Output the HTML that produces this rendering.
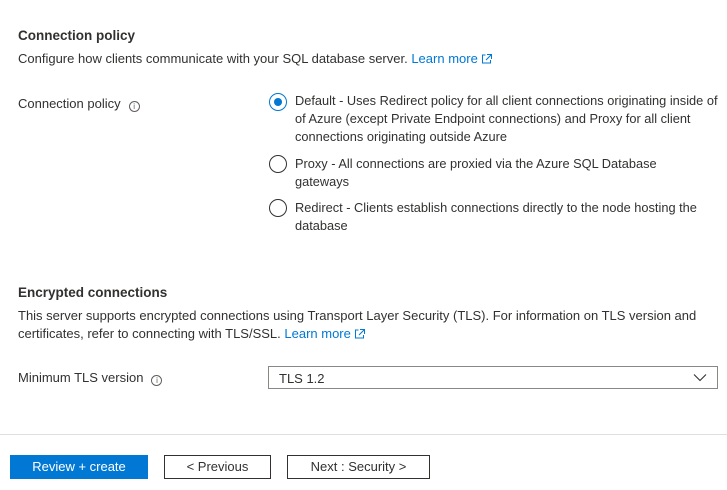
<!DOCTYPE html>
<html><head><style>
body{margin:0;width:727px;height:490px;background:#fff;font-family:"Liberation Sans",sans-serif;font-size:13px;color:#323130;position:relative;overflow:hidden}
.a{position:absolute;white-space:nowrap}
a{color:#0078d4;text-decoration:none}
.info{display:inline-block;width:11px;height:11px;border:1px solid #605e5c;border-radius:50%;font-size:8px;line-height:10px;text-align:center;color:#605e5c;margin-left:8px;vertical-align:-1px;box-sizing:border-box}
.r{position:absolute;width:18px;height:18px;border:1px solid #323130;border-radius:50%;box-sizing:border-box;left:269px}
.rt{position:absolute;left:295px;line-height:18px;white-space:nowrap;font-size:12.8px}
.btn{position:absolute;top:455px;height:24px;box-sizing:border-box;border:1px solid #323130;text-align:center;line-height:22px;font-size:13px}
.hd{font-size:13.5px;font-weight:bold}
</style></head><body>
<div class="a hd" style="left:18px;top:28px">Connection policy</div>
<div class="a" style="left:18px;top:51px">Configure how clients communicate with your SQL database server. <a>Learn more</a><svg width="12" height="11" style="margin-left:3px;vertical-align:-1px"><path d="M4.5 2H1.5V10H9.5V7M6 1.5H10.5V6M10.5 1.5L5 7" fill="none" stroke="#0078d4"/></svg></div>
<div class="a" style="left:18px;top:96px">Connection policy<span class="info">i</span></div>
<div class="r" style="top:93px;border-color:#0078d4"><div style="position:absolute;left:4px;top:4px;width:8px;height:8px;border-radius:50%;background:#0078d4"></div></div>
<div class="rt" style="top:92px">Default - Uses Redirect policy for all client connections originating inside of<br>of Azure (except Private Endpoint connections) and Proxy for all client<br>connections originating outside Azure</div>
<div class="r" style="top:155px"></div>
<div class="rt" style="top:155px">Proxy - All connections are proxied via the Azure SQL Database<br>gateways</div>
<div class="r" style="top:199px"></div>
<div class="rt" style="top:199px">Redirect - Clients establish connections directly to the node hosting the<br>database</div>
<div class="a hd" style="left:18px;top:285px">Encrypted connections</div>
<div class="a" style="left:18px;top:307px;line-height:18px">This server supports encrypted connections using Transport Layer Security (TLS). For information on TLS version and<br>certificates, refer to connecting with TLS/SSL. <a>Learn more</a><svg width="12" height="11" style="margin-left:3px;vertical-align:-1px"><path d="M4.5 2H1.5V10H9.5V7M6 1.5H10.5V6M10.5 1.5L5 7" fill="none" stroke="#0078d4"/></svg></div>
<div class="a" style="left:18px;top:370px">Minimum TLS version<span class="info">i</span></div>
<div class="a" style="left:268px;top:366px;width:450px;height:23px;border:1px solid #8a8886;box-sizing:border-box"><span style="position:absolute;left:10px;top:4px">TLS 1.2</span>
<svg style="position:absolute;right:10px;top:6px" width="14" height="9"><path d="M1 1.5L7 7.5L13 1.5" fill="none" stroke="#323130" stroke-width="1.1"/></svg></div>
<div class="a" style="left:0;top:434px;width:727px;height:1px;background:#e1dfdd"></div>
<div class="btn" style="left:10px;width:138px;background:#0078d4;border-color:#0078d4;color:#fff">Review + create</div>
<div class="btn" style="left:164px;width:107px">&lt; Previous</div>
<div class="btn" style="left:287px;width:143px">Next : Security &gt;</div>
</body></html>
